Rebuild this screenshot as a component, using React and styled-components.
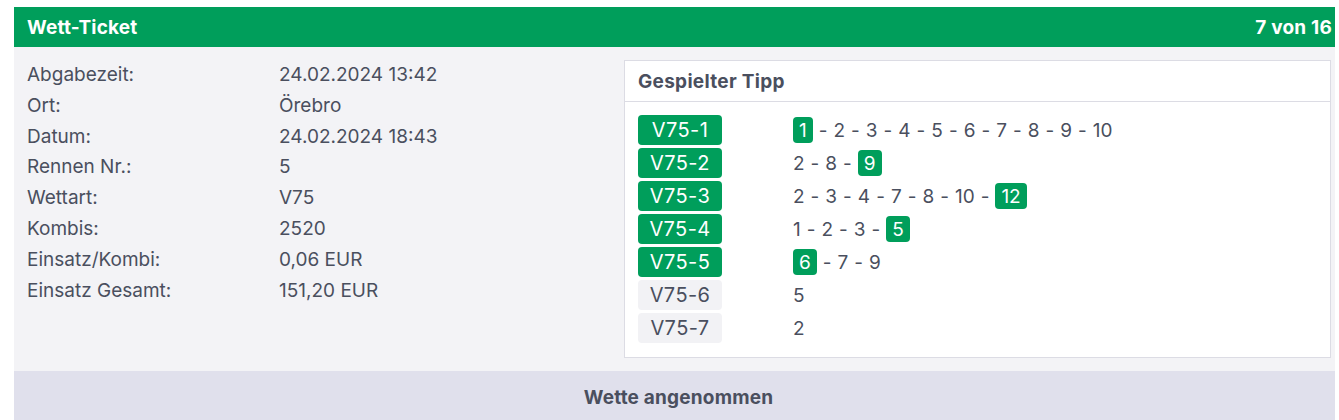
import React from "react";
import styled, { createGlobalStyle } from "styled-components";

const GlobalStyle = createGlobalStyle`
  body {
    margin: 7px 4px 0 14px;
    background: #ffffff;
    font-family: Inter, "Open Sans", Arial, sans-serif;
    color: #4a4f5e;
  }
`;

const info = [
  ["Abgabezeit:", "24.02.2024 13:42"],
  ["Ort:", "Örebro"],
  ["Datum:", "24.02.2024 18:43"],
  ["Rennen Nr.:", "5"],
  ["Wettart:", "V75"],
  ["Kombis:", "2520"],
  ["Einsatz/Kombi:", "0,06 EUR"],
  ["Einsatz Gesamt:", "151,20 EUR"],
];

// hit = the winning number in that leg
const legs = [
  { name: "V75-1", nums: [1, 2, 3, 4, 5, 6, 7, 8, 9, 10], hit: 1 },
  { name: "V75-2", nums: [2, 8, 9], hit: 9 },
  { name: "V75-3", nums: [2, 3, 4, 7, 8, 10, 12], hit: 12 },
  { name: "V75-4", nums: [1, 2, 3, 5], hit: 5 },
  { name: "V75-5", nums: [6, 7, 9], hit: 6 },
  { name: "V75-6", nums: [5], hit: null },
  { name: "V75-7", nums: [2], hit: null },
];

const App = () => {
  return (
    <>
      <GlobalStyle />
      <Card>
        <Header>
          <span>Wett-Ticket</span>
          <span>7 von 16</span>
        </Header>
        <Body>
          <InfoList>
            {info.map(([label, value]) => (
              <InfoRow key={label}>
                <Label>{label}</Label>
                <Value>{value}</Value>
              </InfoRow>
            ))}
          </InfoList>
          <TipBox>
            <TipTitle>Gespielter Tipp</TipTitle>
            <TipBody>
              {legs.map((leg) => (
                <LegRow key={leg.name}>
                  <LegBadge $won={leg.hit !== null}>{leg.name}</LegBadge>
                  <Numbers>
                    {leg.nums.map((n, i) => (
                      <React.Fragment key={n}>
                        {i > 0 && <Dash>-</Dash>}
                        {n === leg.hit ? <Hit>{n}</Hit> : <span>{n}</span>}
                      </React.Fragment>
                    ))}
                  </Numbers>
                </LegRow>
              ))}
            </TipBody>
          </TipBox>
        </Body>
        <Footer>Wette angenommen</Footer>
      </Card>
    </>
  );
};

export default App;

const Card = styled.div`
  display: flex;
  flex-direction: column;
`;

const Header = styled.div`
  height: 40px;
  background: #009e5b;
  color: #ffffff;
  font-weight: 700;
  font-size: 19px;
  letter-spacing: 0.2px;
  display: flex;
  align-items: center;
  justify-content: space-between;
  padding: 0 3px 0 13px;
`;

const Body = styled.div`
  background: #f3f3f6;
  display: grid;
  grid-template-columns: 597px 1fr;
  padding: 13px 4px 13px 13px;
  align-items: start;
`;

const InfoList = styled.div`
  display: flex;
  flex-direction: column;
`;

const InfoRow = styled.div`
  display: grid;
  grid-template-columns: 252px 1fr;
  font-size: 19px;
  line-height: 30.8px;
`;

const Label = styled.div``;

const Value = styled.div``;

const TipBox = styled.div`
  background: #ffffff;
  border: 1px solid #dcdce4;
`;

const TipTitle = styled.div`
  height: 40px;
  display: flex;
  align-items: center;
  padding: 0 13px;
  font-size: 19px;
  letter-spacing: 0.3px;
  font-weight: 700;
  border-bottom: 1px solid #dcdce4;
`;

const TipBody = styled.div`
  display: flex;
  flex-direction: column;
  gap: 3px;
  padding: 13px 13px 14px 13px;
`;

const LegRow = styled.div`
  display: flex;
  align-items: center;
  height: 30px;
`;

const LegBadge = styled.div`
  width: 84px;
  height: 30px;
  border-radius: 4px;
  display: flex;
  align-items: center;
  justify-content: center;
  font-size: 20px;
  letter-spacing: 0.4px;
  background: ${(p) => (p.$won ? "#009e5b" : "#f2f2f5")};
  color: ${(p) => (p.$won ? "#ffffff" : "#4a4f5e")};
  margin-right: 71px;
`;

const Numbers = styled.div`
  display: flex;
  align-items: center;
  font-size: 19px;
`;

const Dash = styled.span`
  margin: 0 6px;
`;

const Hit = styled.span`
  display: inline-flex;
  align-items: center;
  justify-content: center;
  height: 26px;
  background: #009e5b;
  color: #ffffff;
  border-radius: 4px;
  padding: 0 6px;
`;

const Footer = styled.div`
  height: 52px;
  background: #e0e0ec;
  display: flex;
  align-items: center;
  justify-content: center;
  padding-left: 8px;
  font-size: 19px;
  letter-spacing: 0.2px;
  font-weight: 700;
`;
